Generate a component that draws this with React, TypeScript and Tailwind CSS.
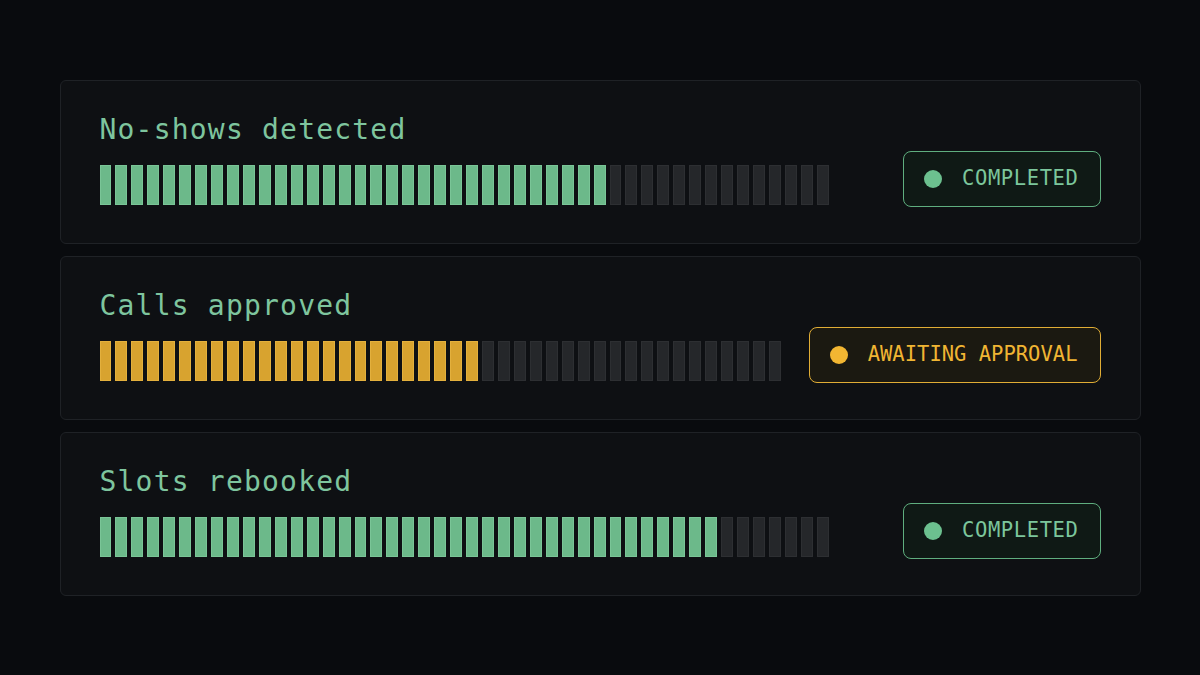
const rows = [
  { title: "No-shows detected", total: 46, filled: 32, status: "done" },
  { title: "Calls approved", total: 43, filled: 24, status: "pending" },
  { title: "Slots rebooked", total: 46, filled: 39, status: "done" },
] as const

const mono = "font-['DejaVu_Sans_Mono','Liberation_Mono',monospace]"

function Segments({ total, filled, status }: { total: number; filled: number; status: string }) {
  const on =
    status === "done"
      ? "bg-[#6cb98a] shadow-[inset_0_0_0_1px_rgba(150,220,175,0.35)]"
      : "bg-[#d8a32f] shadow-[inset_0_0_0_1px_rgba(250,200,90,0.35)]"
  return (
    <div className="flex gap-1 h-10" style={{ width: total * 15.93 - 4 }}>
      {Array.from({ length: total }).map((_, i) => (
        <div
          key={i}
          className={
            "flex-1 " +
            (i < filled ? on : "bg-[#25272a] shadow-[inset_0_0_0_1px_rgba(255,255,255,0.04)]")
          }
        />
      ))}
    </div>
  )
}

function Badge({ status }: { status: string }) {
  if (status === "done") {
    return (
      <div className="flex items-center gap-5 h-14 pl-5 pr-[21px] rounded-lg border-[1.5px] border-[#5fae7f] bg-[#0f1915] mb-[-2px]">
        <span className="w-[18px] h-[18px] rounded-full bg-[#6cc08f]" />
        <span className={`${mono} text-[20.5px] leading-none tracking-[0.6px] text-[#7cc69c]`}>COMPLETED</span>
      </div>
    )
  }
  return (
    <div className="flex items-center gap-5 h-14 pl-5 pr-[22px] rounded-lg border-[1.5px] border-[#e0ad35] bg-[#1b1911] mb-[-2px]">
      <span className="w-[18px] h-[18px] rounded-full bg-[#f2b632]" />
      <span className={`${mono} text-[20.5px] leading-none text-[#f0b533]`}>AWAITING APPROVAL</span>
    </div>
  )
}

export default function App() {
  return (
    <div className="w-[1200px] h-[675px] bg-[#090b0e] flex flex-col justify-center items-center gap-3">
      {rows.map((r) => (
        <div
          key={r.title}
          className="w-[1081px] h-[164px] rounded-md border border-[#1f2226] bg-[#0e1013] pl-[39px] pr-[39px] pt-[35px] pb-[38px] flex items-end justify-between"
        >
          <div className="flex flex-col">
            <h2 className={`${mono} text-[28px] leading-[28px] tracking-[1.2px] text-[#7ec59e] font-normal`}>
              {r.title}
            </h2>
            <div className="mt-[21px]">
              <Segments total={r.total} filled={r.filled} status={r.status} />
            </div>
          </div>
          <Badge status={r.status} />
        </div>
      ))}
    </div>
  )
}
